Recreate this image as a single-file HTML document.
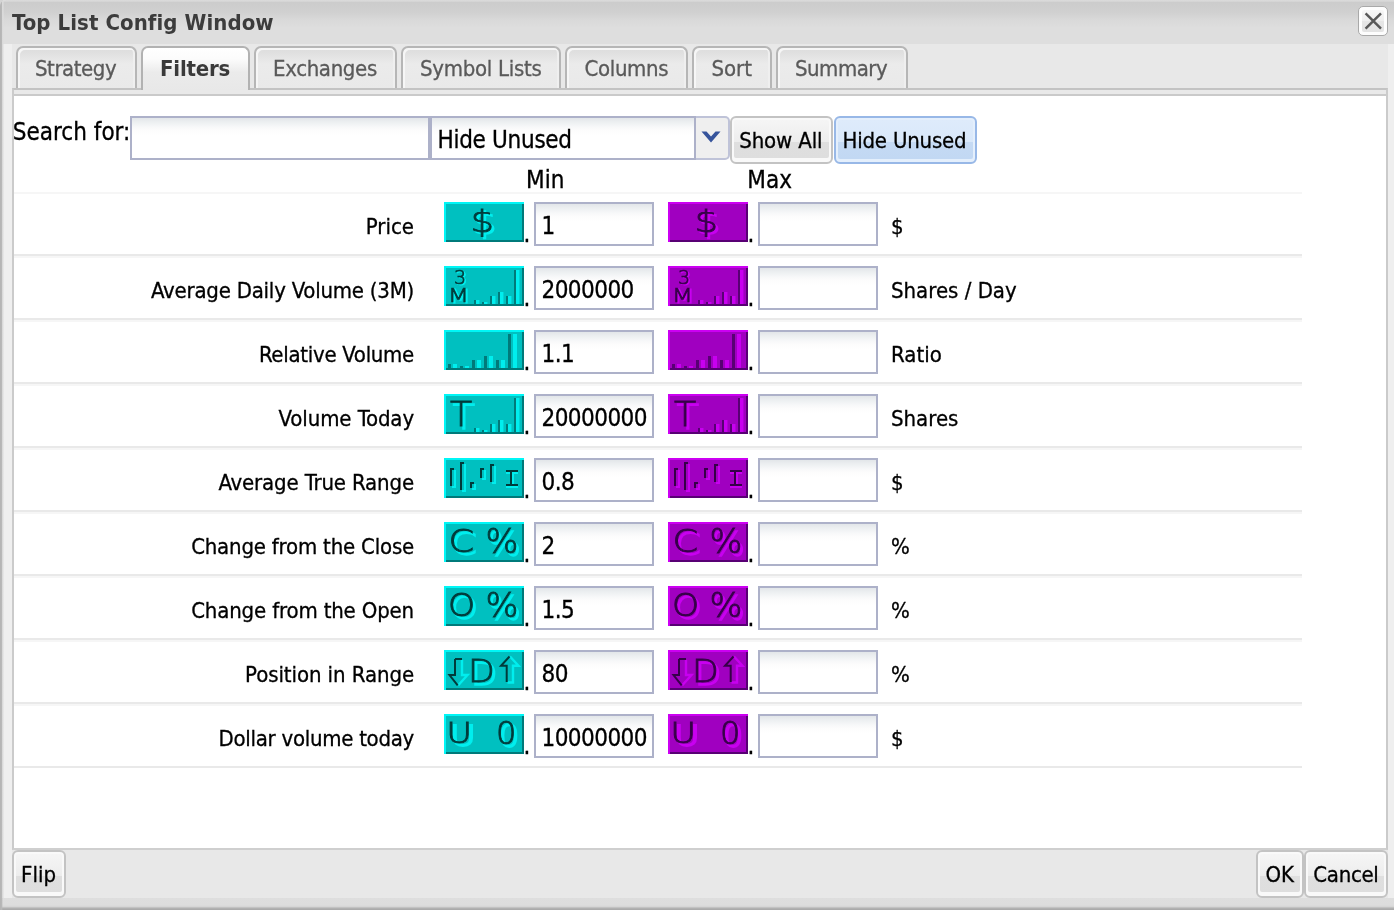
<!DOCTYPE html>
<html lang="en">
<head>
<meta charset="utf-8">
<title>Top List Config Window</title>
<style>
html,body{margin:0;padding:0;}
body{width:1394px;height:910px;overflow:hidden;background:#d4d4d4;position:relative;
  font-family:"DejaVu Sans Condensed","Liberation Sans",sans-serif;font-size:22px;color:#000;-webkit-text-stroke:0.3px currentColor;}
*{box-sizing:border-box;}
.abs{position:absolute;}
.t{position:absolute;white-space:nowrap;line-height:1;}
/* window frame */
#win{will-change:transform;position:absolute;left:0;top:0;width:1394px;height:910px;background:#efefef;border-top-left-radius:6px;overflow:hidden;}
#leftedge{position:absolute;left:0;top:0;width:5px;height:898px;background:linear-gradient(to right,#b4b4b4 0,#b8b8b8 1.5px,#dddddd 2.6px,rgba(239,239,239,0) 4.5px);z-index:5;}
#titlebar{position:absolute;left:0;top:0;width:1394px;height:44px;
  background:linear-gradient(to bottom,#dadada 0,#d9d9d9 1px,#cccccc 2.5px,#cecece 7px,#d1d1d1 13px,#d9d9d9 20px,#dedede 28px,#dedede 44px);}
#title{left:12px;top:12px;font-size:22px;font-weight:bold;color:#3c3c3c;letter-spacing:0.07px;-webkit-text-stroke:0;}
#bottomframe{position:absolute;left:0;top:898px;width:1394px;height:12px;
  background:linear-gradient(to right,#b4b4b4 0,#b8b8b8 1.5px,rgba(200,200,200,0) 3px),linear-gradient(to bottom,#dedede 0,#dddddd 7px,#d6d6d6 8.5px,#b8b8b8 10px,#aaaaaa 11px,#aaaaaa 12px);}
#inner{position:absolute;left:12px;top:44px;width:1376px;height:854px;background:#e8e8e8;}
/* close button */
.btn{position:absolute;border:2px solid #c3c3c3;border-radius:6px;background:#f9f9f9;}
.btn i{position:absolute;left:2px;top:2px;right:2px;bottom:4px;border-radius:2px;display:block;
  background:linear-gradient(to bottom,#f5f5f5 0,#ededed 57%,#dfdfdf 57%,#dedede 100%);}
.btn span{position:absolute;white-space:nowrap;line-height:1;}
.btn.blue{border:2px solid #98b8e7;background:#e4effc;}
.btn.blue i{left:2px;top:2px;right:2px;bottom:3px;background:linear-gradient(to bottom,#deebfb 0,#d9e8fa 57%,#c5daf4 57%,#c2d8f3 100%);}
/* tabs */
.tab{position:absolute;top:46px;height:43px;border:2px solid #b6b6b6;border-bottom:none;border-radius:7px 7px 0 0;
  background:linear-gradient(to bottom,#dedede 0,#dfdfdf 4px,#e4e4e4 9px,#ebebeb 16px,#e9e9e9 100%);box-shadow:inset 2px 2px 0 #f6f6f6,inset -2px 0 0 #efefef;color:#5a5a5a;}
.tab span{position:absolute;white-space:nowrap;line-height:1;top:9.5px;}
.tab.active{height:44px;background:linear-gradient(to bottom,#ffffff 0,#fcfcfc 25%,#ebebeb 58%,#e8e8e8 100%);color:#3a3a3a;font-weight:bold;-webkit-text-stroke:0;z-index:3;box-shadow:none;border-color:#b2b2b2;}
/* pane */
#paneouter{position:absolute;left:12px;top:88px;width:1376px;height:762px;border:2px solid #cbcbcb;border-top-color:#c3c3c3;border-bottom-color:#cfcfcf;background:#e9e9e9;}
#pane{position:absolute;left:14px;top:94px;width:1372px;height:754px;border-top:2px solid #cacaca;background:#fff;}
/* inputs */
.inp{position:absolute;height:44px;border:2px solid #adb1c9;background:linear-gradient(to bottom,#e2e6e9 0,#eceff1 4px,#f7f8f9 9px,#fdfdfd 13px,#fff 17px);font-size:24px;}
.inp span{position:absolute;left:5.5px;top:10px;white-space:nowrap;line-height:1;letter-spacing:-0.55px;}
.row{position:absolute;left:14px;width:1288px;height:64px;border-top:2px solid #f6f6f6;border-bottom:2px solid #e9e9e9;}
.lbl{position:absolute;right:888px;top:22px;white-space:nowrap;line-height:1;font-size:22px;}
.unit{position:absolute;left:877px;top:22px;white-space:nowrap;line-height:1;font-size:22px;}
.dot{position:absolute;top:28px;font-size:24px;line-height:1;}
.ico{position:absolute;top:8px;width:80px;height:40px;}
</style>
</head>
<body>
<div id="win">
  <div id="titlebar"></div>
  <div id="inner"></div>
  <div id="bottomframe"></div>
  <div id="leftedge"></div>
  <div id="title" class="t">Top List Config Window</div>
  <div class="btn" style="left:1358px;top:6px;width:30px;height:30px;border-width:1.5px;border-color:#a9a9a9;border-radius:5px;background:#fdfdfd;"><i style="left:3px;top:3px;right:3px;bottom:3.5px;background:linear-gradient(to bottom,#f7f7f7 0,#eeeeee 50%,#e6e6e6 52%,#e3e3e3 100%);"></i>
    <svg class="abs" style="left:-1.5px;top:-1.5px" width="30" height="30" viewBox="0 0 30 30"><path d="M7.6 7.4 L23 22.6 M23 7.4 L7.6 22.6" stroke="#585858" stroke-width="2.5" fill="none"/></svg>
  </div>

  <!-- tabs -->
  <div class="tab" style="left:16px;width:121px;"><span style="left:17px;letter-spacing:-0.45px;">Strategy</span></div>
  <div class="tab active" style="left:141px;width:109px;"><span style="left:17px;letter-spacing:-0.2px;">Filters</span></div>
  <div class="tab" style="left:254px;width:143px;"><span style="left:17px;letter-spacing:-0.35px;">Exchanges</span></div>
  <div class="tab" style="left:401px;width:160px;"><span style="left:17px;letter-spacing:-0.28px;">Symbol Lists</span></div>
  <div class="tab" style="left:565px;width:123px;"><span style="left:17.5px;letter-spacing:-0.35px;">Columns</span></div>
  <div class="tab" style="left:692px;width:80px;"><span style="left:17.4px;">Sort</span></div>
  <div class="tab" style="left:776px;width:132px;"><span style="left:17px;letter-spacing:-0.5px;">Summary</span></div>

  <div id="paneouter"></div>
  <div id="pane"></div>

  <!-- search row -->
  <div class="t" style="left:12.8px;top:120px;font-size:24px;">Search for:</div>
  <div class="inp" style="left:130px;top:116px;width:300px;"></div>
  <div class="inp" style="left:430px;top:116px;width:266px;"><span style="letter-spacing:-0.3px">Hide Unused</span></div>
  <div class="abs" id="combobtn" style="left:696px;top:116px;width:34px;height:44px;border:2px solid #bfc3d8;border-left:none;border-radius:0 5px 5px 0;background:#efefef;">
    <svg class="abs" style="left:4px;top:12px" width="22" height="14" viewBox="0 0 22 14"><path d="M1.5 1.5 L6.5 1.5 L11 6.5 L15.5 1.5 L20.5 1.5 L11 12.5 Z" fill="#36549c"/></svg>
  </div>
  <div class="btn" style="left:730px;top:116px;width:103px;height:48px;"><i></i><span style="left:7.3px;top:11.5px;letter-spacing:-0.15px;">Show All</span></div>
  <div class="btn blue" style="left:834px;top:116px;width:143px;height:48px;"><i></i><span style="left:6.5px;top:11.5px;letter-spacing:-0.2px;">Hide Unused</span></div>

  <div class="t" style="left:526px;top:168px;font-size:24px;">Min</div>
  <div class="t" style="left:747.3px;top:168px;font-size:24px;">Max</div>

  <!-- ROWS -->
  <div class="row" style="top:192px;">
    <div class="lbl" style="letter-spacing:0px">Price</div>
    <svg class="ico" style="left:430px" width="80" height="40" viewBox="0 0 80 40"><rect width="80" height="40" fill="#00c0c0"/><path d="M0 0H80V2H2V40H0Z" fill="#00f6f6"/><path d="M80 40H2V38H78V2H80Z" fill="#007a7a"/><g style="filter:blur(.45px)"><g transform="translate(26.5 29.5) scale(1.2 1)"><text x="2" y="2" font-family="DejaVu Sans Light, DejaVu Sans, sans-serif" font-weight="200" font-size="31" fill="#00eeee" stroke="#00eeee" stroke-width="1.3">$</text><text x="0" y="0" font-family="DejaVu Sans Light, DejaVu Sans, sans-serif" font-weight="200" font-size="31" fill="#003a3a" stroke="#003a3a" stroke-width="0.85">$</text></g></g></svg><span class="dot" style="left:509.5px">.</span>
    <div class="inp" style="left:520px;top:8px;width:120px;"><span>1</span></div>
    <svg class="ico" style="left:654px" width="80" height="40" viewBox="0 0 80 40"><rect width="80" height="40" fill="#a000c0"/><path d="M0 0H80V2H2V40H0Z" fill="#cc00f2"/><path d="M80 40H2V38H78V2H80Z" fill="#580074"/><g style="filter:blur(.45px)"><g transform="translate(26.5 29.5) scale(1.2 1)"><text x="2" y="2" font-family="DejaVu Sans Light, DejaVu Sans, sans-serif" font-weight="200" font-size="31" fill="#c800f0" stroke="#c800f0" stroke-width="1.3">$</text><text x="0" y="0" font-family="DejaVu Sans Light, DejaVu Sans, sans-serif" font-weight="200" font-size="31" fill="#360048" stroke="#360048" stroke-width="0.85">$</text></g></g></svg><span class="dot" style="left:733.5px">.</span>
    <div class="inp" style="left:744px;top:8px;width:120px;"></div>
    <div class="unit">$</div>
  </div>
  <div class="row" style="top:256px;">
    <div class="lbl" style="letter-spacing:-0.23px">Average Daily Volume (3M)</div>
    <svg class="ico" style="left:430px" width="80" height="40" viewBox="0 0 80 40"><rect width="80" height="40" fill="#00c0c0"/><path d="M0 0H80V2H2V40H0Z" fill="#00f6f6"/><path d="M80 40H2V38H78V2H80Z" fill="#007a7a"/><g style="filter:blur(.45px)"><g transform="translate(10 18) scale(1.0 1)"><text x="1.5" y="1" font-family="DejaVu Sans Light, DejaVu Sans, sans-serif" font-weight="200" font-size="19" fill="#00eeee" stroke="#00eeee" stroke-width="0.8">3</text><text x="0" y="0" font-family="DejaVu Sans Light, DejaVu Sans, sans-serif" font-weight="200" font-size="19" fill="#003a3a" stroke="#003a3a" stroke-width="0.7">3</text></g><g transform="translate(3.8 36) scale(1.3 1)"><text x="1.5" y="1" font-family="DejaVu Sans Light, DejaVu Sans, sans-serif" font-weight="200" font-size="19" fill="#00eeee" stroke="#00eeee" stroke-width="0.8">M</text><text x="0" y="0" font-family="DejaVu Sans Light, DejaVu Sans, sans-serif" font-weight="200" font-size="19" fill="#003a3a" stroke="#003a3a" stroke-width="0.7">M</text></g><rect x="30" y="34" width="2" height="4" fill="#007a7a"/><rect x="32" y="34" width="3" height="4" fill="#00eeee"/><rect x="35" y="34" width="1" height="4" fill="#00eeee" opacity="0.45"/><rect x="38" y="36" width="2" height="2" fill="#007a7a"/><rect x="40" y="36" width="3" height="2" fill="#00eeee"/><rect x="43" y="36" width="1" height="2" fill="#00eeee" opacity="0.45"/><rect x="46" y="30" width="2" height="8" fill="#007a7a"/><rect x="48" y="30" width="3" height="8" fill="#00eeee"/><rect x="51" y="30" width="1" height="8" fill="#00eeee" opacity="0.45"/><rect x="54" y="26" width="2" height="12" fill="#007a7a"/><rect x="56" y="26" width="3" height="12" fill="#00eeee"/><rect x="59" y="26" width="1" height="12" fill="#00eeee" opacity="0.45"/><rect x="62" y="30" width="2" height="8" fill="#007a7a"/><rect x="64" y="30" width="3" height="8" fill="#00eeee"/><rect x="67" y="30" width="1" height="8" fill="#00eeee" opacity="0.45"/><rect x="70" y="4" width="2" height="34" fill="#007a7a"/><rect x="72" y="4" width="3" height="34" fill="#00eeee"/><rect x="75" y="4" width="1" height="34" fill="#00eeee" opacity="0.45"/></g></svg><span class="dot" style="left:509.5px">.</span>
    <div class="inp" style="left:520px;top:8px;width:120px;"><span>2000000</span></div>
    <svg class="ico" style="left:654px" width="80" height="40" viewBox="0 0 80 40"><rect width="80" height="40" fill="#a000c0"/><path d="M0 0H80V2H2V40H0Z" fill="#cc00f2"/><path d="M80 40H2V38H78V2H80Z" fill="#580074"/><g style="filter:blur(.45px)"><g transform="translate(10 18) scale(1.0 1)"><text x="1.5" y="1" font-family="DejaVu Sans Light, DejaVu Sans, sans-serif" font-weight="200" font-size="19" fill="#c800f0" stroke="#c800f0" stroke-width="0.8">3</text><text x="0" y="0" font-family="DejaVu Sans Light, DejaVu Sans, sans-serif" font-weight="200" font-size="19" fill="#360048" stroke="#360048" stroke-width="0.7">3</text></g><g transform="translate(3.8 36) scale(1.3 1)"><text x="1.5" y="1" font-family="DejaVu Sans Light, DejaVu Sans, sans-serif" font-weight="200" font-size="19" fill="#c800f0" stroke="#c800f0" stroke-width="0.8">M</text><text x="0" y="0" font-family="DejaVu Sans Light, DejaVu Sans, sans-serif" font-weight="200" font-size="19" fill="#360048" stroke="#360048" stroke-width="0.7">M</text></g><rect x="30" y="34" width="2" height="4" fill="#580074"/><rect x="32" y="34" width="3" height="4" fill="#c800f0"/><rect x="35" y="34" width="1" height="4" fill="#c800f0" opacity="0.45"/><rect x="38" y="36" width="2" height="2" fill="#580074"/><rect x="40" y="36" width="3" height="2" fill="#c800f0"/><rect x="43" y="36" width="1" height="2" fill="#c800f0" opacity="0.45"/><rect x="46" y="30" width="2" height="8" fill="#580074"/><rect x="48" y="30" width="3" height="8" fill="#c800f0"/><rect x="51" y="30" width="1" height="8" fill="#c800f0" opacity="0.45"/><rect x="54" y="26" width="2" height="12" fill="#580074"/><rect x="56" y="26" width="3" height="12" fill="#c800f0"/><rect x="59" y="26" width="1" height="12" fill="#c800f0" opacity="0.45"/><rect x="62" y="30" width="2" height="8" fill="#580074"/><rect x="64" y="30" width="3" height="8" fill="#c800f0"/><rect x="67" y="30" width="1" height="8" fill="#c800f0" opacity="0.45"/><rect x="70" y="4" width="2" height="34" fill="#580074"/><rect x="72" y="4" width="3" height="34" fill="#c800f0"/><rect x="75" y="4" width="1" height="34" fill="#c800f0" opacity="0.45"/></g></svg><span class="dot" style="left:733.5px">.</span>
    <div class="inp" style="left:744px;top:8px;width:120px;"></div>
    <div class="unit">Shares / Day</div>
  </div>
  <div class="row" style="top:320px;">
    <div class="lbl" style="letter-spacing:-0.29px">Relative Volume</div>
    <svg class="ico" style="left:430px" width="80" height="40" viewBox="0 0 80 40"><rect width="80" height="40" fill="#00c0c0"/><path d="M0 0H80V2H2V40H0Z" fill="#00f6f6"/><path d="M80 40H2V38H78V2H80Z" fill="#007a7a"/><g style="filter:blur(.45px)"><rect x="4" y="34" width="3" height="4" fill="#007a7a"/><rect x="9" y="34" width="4" height="4" fill="#00eeee"/><rect x="16" y="36" width="3" height="2" fill="#007a7a"/><rect x="21" y="36" width="4" height="2" fill="#00eeee"/><rect x="28" y="30" width="3" height="8" fill="#007a7a"/><rect x="33" y="30" width="4" height="8" fill="#00eeee"/><rect x="40" y="26" width="3" height="12" fill="#007a7a"/><rect x="45" y="26" width="4" height="12" fill="#00eeee"/><rect x="52" y="30" width="3" height="8" fill="#007a7a"/><rect x="57" y="30" width="4" height="8" fill="#00eeee"/><rect x="64" y="4" width="3" height="34" fill="#007a7a"/><rect x="69" y="4" width="4" height="34" fill="#00eeee"/></g></svg><span class="dot" style="left:509.5px">.</span>
    <div class="inp" style="left:520px;top:8px;width:120px;"><span>1.1</span></div>
    <svg class="ico" style="left:654px" width="80" height="40" viewBox="0 0 80 40"><rect width="80" height="40" fill="#a000c0"/><path d="M0 0H80V2H2V40H0Z" fill="#cc00f2"/><path d="M80 40H2V38H78V2H80Z" fill="#580074"/><g style="filter:blur(.45px)"><rect x="4" y="34" width="3" height="4" fill="#580074"/><rect x="9" y="34" width="4" height="4" fill="#c800f0"/><rect x="16" y="36" width="3" height="2" fill="#580074"/><rect x="21" y="36" width="4" height="2" fill="#c800f0"/><rect x="28" y="30" width="3" height="8" fill="#580074"/><rect x="33" y="30" width="4" height="8" fill="#c800f0"/><rect x="40" y="26" width="3" height="12" fill="#580074"/><rect x="45" y="26" width="4" height="12" fill="#c800f0"/><rect x="52" y="30" width="3" height="8" fill="#580074"/><rect x="57" y="30" width="4" height="8" fill="#c800f0"/><rect x="64" y="4" width="3" height="34" fill="#580074"/><rect x="69" y="4" width="4" height="34" fill="#c800f0"/></g></svg><span class="dot" style="left:733.5px">.</span>
    <div class="inp" style="left:744px;top:8px;width:120px;"></div>
    <div class="unit">Ratio</div>
  </div>
  <div class="row" style="top:384px;">
    <div class="lbl" style="letter-spacing:-0.1px">Volume Today</div>
    <svg class="ico" style="left:430px" width="80" height="40" viewBox="0 0 80 40"><rect width="80" height="40" fill="#00c0c0"/><path d="M0 0H80V2H2V40H0Z" fill="#00f6f6"/><path d="M80 40H2V38H78V2H80Z" fill="#007a7a"/><g style="filter:blur(.45px)"><g transform="translate(6 32) scale(1.1 1)"><text x="2.5" y="2.5" font-family="DejaVu Sans Light, DejaVu Sans, sans-serif" font-weight="200" font-size="33" fill="#00eeee" stroke="#00eeee" stroke-width="1.3">T</text><text x="0" y="0" font-family="DejaVu Sans Light, DejaVu Sans, sans-serif" font-weight="200" font-size="33" fill="#003a3a" stroke="#003a3a" stroke-width="0.85">T</text></g><rect x="30" y="34" width="2" height="4" fill="#007a7a"/><rect x="32" y="34" width="3" height="4" fill="#00eeee"/><rect x="35" y="34" width="1" height="4" fill="#00eeee" opacity="0.45"/><rect x="38" y="36" width="2" height="2" fill="#007a7a"/><rect x="40" y="36" width="3" height="2" fill="#00eeee"/><rect x="43" y="36" width="1" height="2" fill="#00eeee" opacity="0.45"/><rect x="46" y="30" width="2" height="8" fill="#007a7a"/><rect x="48" y="30" width="3" height="8" fill="#00eeee"/><rect x="51" y="30" width="1" height="8" fill="#00eeee" opacity="0.45"/><rect x="54" y="26" width="2" height="12" fill="#007a7a"/><rect x="56" y="26" width="3" height="12" fill="#00eeee"/><rect x="59" y="26" width="1" height="12" fill="#00eeee" opacity="0.45"/><rect x="62" y="30" width="2" height="8" fill="#007a7a"/><rect x="64" y="30" width="3" height="8" fill="#00eeee"/><rect x="67" y="30" width="1" height="8" fill="#00eeee" opacity="0.45"/><rect x="70" y="4" width="2" height="34" fill="#007a7a"/><rect x="72" y="4" width="3" height="34" fill="#00eeee"/><rect x="75" y="4" width="1" height="34" fill="#00eeee" opacity="0.45"/></g></svg><span class="dot" style="left:509.5px">.</span>
    <div class="inp" style="left:520px;top:8px;width:120px;"><span>20000000</span></div>
    <svg class="ico" style="left:654px" width="80" height="40" viewBox="0 0 80 40"><rect width="80" height="40" fill="#a000c0"/><path d="M0 0H80V2H2V40H0Z" fill="#cc00f2"/><path d="M80 40H2V38H78V2H80Z" fill="#580074"/><g style="filter:blur(.45px)"><g transform="translate(6 32) scale(1.1 1)"><text x="2.5" y="2.5" font-family="DejaVu Sans Light, DejaVu Sans, sans-serif" font-weight="200" font-size="33" fill="#c800f0" stroke="#c800f0" stroke-width="1.3">T</text><text x="0" y="0" font-family="DejaVu Sans Light, DejaVu Sans, sans-serif" font-weight="200" font-size="33" fill="#360048" stroke="#360048" stroke-width="0.85">T</text></g><rect x="30" y="34" width="2" height="4" fill="#580074"/><rect x="32" y="34" width="3" height="4" fill="#c800f0"/><rect x="35" y="34" width="1" height="4" fill="#c800f0" opacity="0.45"/><rect x="38" y="36" width="2" height="2" fill="#580074"/><rect x="40" y="36" width="3" height="2" fill="#c800f0"/><rect x="43" y="36" width="1" height="2" fill="#c800f0" opacity="0.45"/><rect x="46" y="30" width="2" height="8" fill="#580074"/><rect x="48" y="30" width="3" height="8" fill="#c800f0"/><rect x="51" y="30" width="1" height="8" fill="#c800f0" opacity="0.45"/><rect x="54" y="26" width="2" height="12" fill="#580074"/><rect x="56" y="26" width="3" height="12" fill="#c800f0"/><rect x="59" y="26" width="1" height="12" fill="#c800f0" opacity="0.45"/><rect x="62" y="30" width="2" height="8" fill="#580074"/><rect x="64" y="30" width="3" height="8" fill="#c800f0"/><rect x="67" y="30" width="1" height="8" fill="#c800f0" opacity="0.45"/><rect x="70" y="4" width="2" height="34" fill="#580074"/><rect x="72" y="4" width="3" height="34" fill="#c800f0"/><rect x="75" y="4" width="1" height="34" fill="#c800f0" opacity="0.45"/></g></svg><span class="dot" style="left:733.5px">.</span>
    <div class="inp" style="left:744px;top:8px;width:120px;"></div>
    <div class="unit">Shares</div>
  </div>
  <div class="row" style="top:448px;">
    <div class="lbl" style="letter-spacing:-0.14px">Average True Range</div>
    <svg class="ico" style="left:430px" width="80" height="40" viewBox="0 0 80 40"><rect width="80" height="40" fill="#00c0c0"/><path d="M0 0H80V2H2V40H0Z" fill="#00f6f6"/><path d="M80 40H2V38H78V2H80Z" fill="#007a7a"/><g style="filter:blur(.45px)"><path d="M6 10H10V12H8V28H6Z" fill="#003a3a"/><path d="M12 12V30H8V28H10V12Z" fill="#00eeee"/><path d="M16 4H20V6H18V32H16Z" fill="#003a3a"/><path d="M22 6V34H18V32H20V6Z" fill="#00eeee"/><path d="M26 24H30V26H28V30H26Z" fill="#003a3a"/><path d="M32 26V32H28V30H30V26Z" fill="#00eeee"/><path d="M36 10H40V12H38V20H36Z" fill="#003a3a"/><path d="M42 12V22H38V20H40V12Z" fill="#00eeee"/><path d="M46 6H50V8H48V24H46Z" fill="#003a3a"/><path d="M52 8V26H48V24H50V8Z" fill="#00eeee"/><path d="M62 14H74V16H62ZM62 28H74V30H62ZM68 16H70V28H68Z" fill="#00eeee"/><path d="M62 12H74V14H62ZM62 26H74V28H62ZM66 14H68V26H66Z" fill="#003a3a"/></g></svg><span class="dot" style="left:509.5px">.</span>
    <div class="inp" style="left:520px;top:8px;width:120px;"><span>0.8</span></div>
    <svg class="ico" style="left:654px" width="80" height="40" viewBox="0 0 80 40"><rect width="80" height="40" fill="#a000c0"/><path d="M0 0H80V2H2V40H0Z" fill="#cc00f2"/><path d="M80 40H2V38H78V2H80Z" fill="#580074"/><g style="filter:blur(.45px)"><path d="M6 10H10V12H8V28H6Z" fill="#360048"/><path d="M12 12V30H8V28H10V12Z" fill="#c800f0"/><path d="M16 4H20V6H18V32H16Z" fill="#360048"/><path d="M22 6V34H18V32H20V6Z" fill="#c800f0"/><path d="M26 24H30V26H28V30H26Z" fill="#360048"/><path d="M32 26V32H28V30H30V26Z" fill="#c800f0"/><path d="M36 10H40V12H38V20H36Z" fill="#360048"/><path d="M42 12V22H38V20H40V12Z" fill="#c800f0"/><path d="M46 6H50V8H48V24H46Z" fill="#360048"/><path d="M52 8V26H48V24H50V8Z" fill="#c800f0"/><path d="M62 14H74V16H62ZM62 28H74V30H62ZM68 16H70V28H68Z" fill="#c800f0"/><path d="M62 12H74V14H62ZM62 26H74V28H62ZM66 14H68V26H66Z" fill="#360048"/></g></svg><span class="dot" style="left:733.5px">.</span>
    <div class="inp" style="left:744px;top:8px;width:120px;"></div>
    <div class="unit">$</div>
  </div>
  <div class="row" style="top:512px;">
    <div class="lbl" style="letter-spacing:-0.2px">Change from the Close</div>
    <svg class="ico" style="left:430px" width="80" height="40" viewBox="0 0 80 40"><rect width="80" height="40" fill="#00c0c0"/><path d="M0 0H80V2H2V40H0Z" fill="#00f6f6"/><path d="M80 40H2V38H78V2H80Z" fill="#007a7a"/><g style="filter:blur(.45px)"><g transform="translate(4.5 30) scale(1.15 1)"><text x="2.5" y="2.5" font-family="DejaVu Sans Light, DejaVu Sans, sans-serif" font-weight="200" font-size="32" fill="#00eeee" stroke="#00eeee" stroke-width="1.3">C</text><text x="0" y="0" font-family="DejaVu Sans Light, DejaVu Sans, sans-serif" font-weight="200" font-size="32" fill="#003a3a" stroke="#003a3a" stroke-width="0.85">C</text></g><g transform="translate(41.5 31) scale(1.05 1)"><text x="2.5" y="2.5" font-family="DejaVu Sans Light, DejaVu Sans, sans-serif" font-weight="200" font-size="33" fill="#00eeee" stroke="#00eeee" stroke-width="1.3">%</text><text x="0" y="0" font-family="DejaVu Sans Light, DejaVu Sans, sans-serif" font-weight="200" font-size="33" fill="#003a3a" stroke="#003a3a" stroke-width="0.85">%</text></g></g></svg><span class="dot" style="left:509.5px">.</span>
    <div class="inp" style="left:520px;top:8px;width:120px;"><span>2</span></div>
    <svg class="ico" style="left:654px" width="80" height="40" viewBox="0 0 80 40"><rect width="80" height="40" fill="#a000c0"/><path d="M0 0H80V2H2V40H0Z" fill="#cc00f2"/><path d="M80 40H2V38H78V2H80Z" fill="#580074"/><g style="filter:blur(.45px)"><g transform="translate(4.5 30) scale(1.15 1)"><text x="2.5" y="2.5" font-family="DejaVu Sans Light, DejaVu Sans, sans-serif" font-weight="200" font-size="32" fill="#c800f0" stroke="#c800f0" stroke-width="1.3">C</text><text x="0" y="0" font-family="DejaVu Sans Light, DejaVu Sans, sans-serif" font-weight="200" font-size="32" fill="#360048" stroke="#360048" stroke-width="0.85">C</text></g><g transform="translate(41.5 31) scale(1.05 1)"><text x="2.5" y="2.5" font-family="DejaVu Sans Light, DejaVu Sans, sans-serif" font-weight="200" font-size="33" fill="#c800f0" stroke="#c800f0" stroke-width="1.3">%</text><text x="0" y="0" font-family="DejaVu Sans Light, DejaVu Sans, sans-serif" font-weight="200" font-size="33" fill="#360048" stroke="#360048" stroke-width="0.85">%</text></g></g></svg><span class="dot" style="left:733.5px">.</span>
    <div class="inp" style="left:744px;top:8px;width:120px;"></div>
    <div class="unit">%</div>
  </div>
  <div class="row" style="top:576px;">
    <div class="lbl" style="letter-spacing:-0.16px">Change from the Open</div>
    <svg class="ico" style="left:430px" width="80" height="40" viewBox="0 0 80 40"><rect width="80" height="40" fill="#00c0c0"/><path d="M0 0H80V2H2V40H0Z" fill="#00f6f6"/><path d="M80 40H2V38H78V2H80Z" fill="#007a7a"/><g style="filter:blur(.45px)"><g transform="translate(4 30) scale(1.08 1)"><text x="2.5" y="2.5" font-family="DejaVu Sans Light, DejaVu Sans, sans-serif" font-weight="200" font-size="32" fill="#00eeee" stroke="#00eeee" stroke-width="1.3">O</text><text x="0" y="0" font-family="DejaVu Sans Light, DejaVu Sans, sans-serif" font-weight="200" font-size="32" fill="#003a3a" stroke="#003a3a" stroke-width="0.85">O</text></g><g transform="translate(41.5 31) scale(1.05 1)"><text x="2.5" y="2.5" font-family="DejaVu Sans Light, DejaVu Sans, sans-serif" font-weight="200" font-size="33" fill="#00eeee" stroke="#00eeee" stroke-width="1.3">%</text><text x="0" y="0" font-family="DejaVu Sans Light, DejaVu Sans, sans-serif" font-weight="200" font-size="33" fill="#003a3a" stroke="#003a3a" stroke-width="0.85">%</text></g></g></svg><span class="dot" style="left:509.5px">.</span>
    <div class="inp" style="left:520px;top:8px;width:120px;"><span>1.5</span></div>
    <svg class="ico" style="left:654px" width="80" height="40" viewBox="0 0 80 40"><rect width="80" height="40" fill="#a000c0"/><path d="M0 0H80V2H2V40H0Z" fill="#cc00f2"/><path d="M80 40H2V38H78V2H80Z" fill="#580074"/><g style="filter:blur(.45px)"><g transform="translate(4 30) scale(1.08 1)"><text x="2.5" y="2.5" font-family="DejaVu Sans Light, DejaVu Sans, sans-serif" font-weight="200" font-size="32" fill="#c800f0" stroke="#c800f0" stroke-width="1.3">O</text><text x="0" y="0" font-family="DejaVu Sans Light, DejaVu Sans, sans-serif" font-weight="200" font-size="32" fill="#360048" stroke="#360048" stroke-width="0.85">O</text></g><g transform="translate(41.5 31) scale(1.05 1)"><text x="2.5" y="2.5" font-family="DejaVu Sans Light, DejaVu Sans, sans-serif" font-weight="200" font-size="33" fill="#c800f0" stroke="#c800f0" stroke-width="1.3">%</text><text x="0" y="0" font-family="DejaVu Sans Light, DejaVu Sans, sans-serif" font-weight="200" font-size="33" fill="#360048" stroke="#360048" stroke-width="0.85">%</text></g></g></svg><span class="dot" style="left:733.5px">.</span>
    <div class="inp" style="left:744px;top:8px;width:120px;"></div>
    <div class="unit">%</div>
  </div>
  <div class="row" style="top:640px;">
    <div class="lbl" style="letter-spacing:-0.08px">Position in Range</div>
    <svg class="ico" style="left:430px" width="80" height="40" viewBox="0 0 80 40"><rect width="80" height="40" fill="#00c0c0"/><path d="M0 0H80V2H2V40H0Z" fill="#00f6f6"/><path d="M80 40H2V38H78V2H80Z" fill="#007a7a"/><g style="filter:blur(.45px)"><path d="M18 10V25H23.5L14.3 35.3" stroke="#00eeee" stroke-width="2.4" fill="none"/><path d="M11 9H18 M11 9V25H5.5L13.7 35.3" stroke="#003a3a" stroke-width="2" fill="none"/><path d="M66 6.5L74.5 15.8H69V32.5H63.5" stroke="#00eeee" stroke-width="2.4" fill="none"/><path d="M65.5 6.5L57 15.8H62.7V32" stroke="#003a3a" stroke-width="2" fill="none"/><g transform="translate(24 32) scale(1.07 1)"><text x="2.5" y="2.5" font-family="DejaVu Sans Light, DejaVu Sans, sans-serif" font-weight="200" font-size="32.5" fill="#00eeee" stroke="#00eeee" stroke-width="1.3">D</text><text x="0" y="0" font-family="DejaVu Sans Light, DejaVu Sans, sans-serif" font-weight="200" font-size="32.5" fill="#003a3a" stroke="#003a3a" stroke-width="0.85">D</text></g></g></svg><span class="dot" style="left:509.5px">.</span>
    <div class="inp" style="left:520px;top:8px;width:120px;"><span>80</span></div>
    <svg class="ico" style="left:654px" width="80" height="40" viewBox="0 0 80 40"><rect width="80" height="40" fill="#a000c0"/><path d="M0 0H80V2H2V40H0Z" fill="#cc00f2"/><path d="M80 40H2V38H78V2H80Z" fill="#580074"/><g style="filter:blur(.45px)"><path d="M18 10V25H23.5L14.3 35.3" stroke="#c800f0" stroke-width="2.4" fill="none"/><path d="M11 9H18 M11 9V25H5.5L13.7 35.3" stroke="#360048" stroke-width="2" fill="none"/><path d="M66 6.5L74.5 15.8H69V32.5H63.5" stroke="#c800f0" stroke-width="2.4" fill="none"/><path d="M65.5 6.5L57 15.8H62.7V32" stroke="#360048" stroke-width="2" fill="none"/><g transform="translate(24 32) scale(1.07 1)"><text x="2.5" y="2.5" font-family="DejaVu Sans Light, DejaVu Sans, sans-serif" font-weight="200" font-size="32.5" fill="#c800f0" stroke="#c800f0" stroke-width="1.3">D</text><text x="0" y="0" font-family="DejaVu Sans Light, DejaVu Sans, sans-serif" font-weight="200" font-size="32.5" fill="#360048" stroke="#360048" stroke-width="0.85">D</text></g></g></svg><span class="dot" style="left:733.5px">.</span>
    <div class="inp" style="left:744px;top:8px;width:120px;"></div>
    <div class="unit">%</div>
  </div>
  <div class="row" style="top:704px;">
    <div class="lbl" style="letter-spacing:-0.28px">Dollar volume today</div>
    <svg class="ico" style="left:430px" width="80" height="40" viewBox="0 0 80 40"><rect width="80" height="40" fill="#00c0c0"/><path d="M0 0H80V2H2V40H0Z" fill="#00f6f6"/><path d="M80 40H2V38H78V2H80Z" fill="#007a7a"/><g style="filter:blur(.45px)"><g transform="translate(2.3 29) scale(1.22 1)"><text x="3" y="3" font-family="DejaVu Sans Light, DejaVu Sans, sans-serif" font-weight="200" font-size="29" fill="#00eeee" stroke="#00eeee" stroke-width="1.8">U</text><text x="0" y="0" font-family="DejaVu Sans Light, DejaVu Sans, sans-serif" font-weight="200" font-size="29" fill="#003a3a" stroke="#003a3a" stroke-width="0.85">U</text></g><g transform="translate(52 30) scale(1.0 1)"><text x="3" y="2.5" font-family="DejaVu Sans Light, DejaVu Sans, sans-serif" font-weight="200" font-size="32" fill="#00eeee" stroke="#00eeee" stroke-width="1.8">0</text><text x="0" y="0" font-family="DejaVu Sans Light, DejaVu Sans, sans-serif" font-weight="200" font-size="32" fill="#003a3a" stroke="#003a3a" stroke-width="0.85">0</text></g></g></svg><span class="dot" style="left:509.5px">.</span>
    <div class="inp" style="left:520px;top:8px;width:120px;"><span>10000000</span></div>
    <svg class="ico" style="left:654px" width="80" height="40" viewBox="0 0 80 40"><rect width="80" height="40" fill="#a000c0"/><path d="M0 0H80V2H2V40H0Z" fill="#cc00f2"/><path d="M80 40H2V38H78V2H80Z" fill="#580074"/><g style="filter:blur(.45px)"><g transform="translate(2.3 29) scale(1.22 1)"><text x="3" y="3" font-family="DejaVu Sans Light, DejaVu Sans, sans-serif" font-weight="200" font-size="29" fill="#c800f0" stroke="#c800f0" stroke-width="1.8">U</text><text x="0" y="0" font-family="DejaVu Sans Light, DejaVu Sans, sans-serif" font-weight="200" font-size="29" fill="#360048" stroke="#360048" stroke-width="0.85">U</text></g><g transform="translate(52 30) scale(1.0 1)"><text x="3" y="2.5" font-family="DejaVu Sans Light, DejaVu Sans, sans-serif" font-weight="200" font-size="32" fill="#c800f0" stroke="#c800f0" stroke-width="1.8">0</text><text x="0" y="0" font-family="DejaVu Sans Light, DejaVu Sans, sans-serif" font-weight="200" font-size="32" fill="#360048" stroke="#360048" stroke-width="0.85">0</text></g></g></svg><span class="dot" style="left:733.5px">.</span>
    <div class="inp" style="left:744px;top:8px;width:120px;"></div>
    <div class="unit">$</div>
  </div>
  <!-- /ROWS -->

  <!-- bottom buttons -->
  <div class="btn" style="left:12px;top:850px;width:54px;height:48px;"><i></i><span style="left:7px;top:11.5px;">Flip</span></div>
  <div class="btn" style="left:1256px;top:850px;width:48px;height:48px;"><i></i><span style="left:7.5px;top:11.5px;">OK</span></div>
  <div class="btn" style="left:1304px;top:850px;width:84px;height:48px;"><i></i><span style="left:7.3px;top:11.5px;letter-spacing:-0.3px;">Cancel</span></div>
</div>
</body>
</html>
